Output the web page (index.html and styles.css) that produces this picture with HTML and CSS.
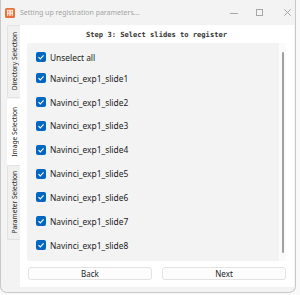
FILE: index.html
```
<!DOCTYPE html>
<html>
<head>
<meta charset="utf-8">
<link rel="stylesheet" href="styles.css">
</head>
<body>
<div class="window">
  <div class="titlebar">
    <svg class="appicon" width="10" height="10" viewBox="0 0 10 10">
      <rect x="0" y="0" width="10" height="10" rx="1.5" fill="#e8723a"/>
      <path d="M1.8 2.3H8.2M2.6 2.3V7.8M4.3 2.3V7.8M5.7 2.3V7.8M7.4 2.3V7.8M2.6 5.2H4.3M5.7 5.2H7.4" stroke="#fff" stroke-width="0.9" fill="none"/>
    </svg>
    <span class="title">Setting up registration parameters...</span>
    <div class="controls">
      <svg class="ctl-min" width="8" height="8" viewBox="0 0 8 8"><path d="M0 4.5H8" stroke="#a6a6a6" stroke-width="1"/></svg>
      <svg class="ctl-max" width="7" height="7" viewBox="0 0 7 7"><rect x="0.5" y="0.5" width="6" height="6" fill="none" stroke="#a6a6a6" stroke-width="1"/></svg>
      <svg class="ctl-close" width="7" height="7" viewBox="0 0 7 7"><path d="M0.3 0.3L6.7 6.7M6.7 0.3L0.3 6.7" stroke="#a6a6a6" stroke-width="1"/></svg>
    </div>
  </div>
  <div class="body">
    <div class="tabs">
      <div class="tab tab-dir"><span class="tab-label">Directory Selection</span></div>
      <div class="tab tab-img active"><span class="tab-label">Image Selection</span></div>
      <div class="tab tab-par"><span class="tab-label">Parameter Selection</span></div>
    </div>
    <div class="pane">
      <div class="heading">Step 3: Select slides to register</div>
      <div class="listbox">
        <div class="list">
          <div class="row first"><span class="cb"><svg width="10" height="10" viewBox="0 0 10 10"><path d="M2.5 5.2L4.3 6.9L7.6 3.3" stroke="#fff" stroke-width="1.1" fill="none"/></svg></span><span class="lbl">Unselect all</span></div>
          <div class="row"><span class="cb"><svg width="10" height="10" viewBox="0 0 10 10"><path d="M2.5 5.2L4.3 6.9L7.6 3.3" stroke="#fff" stroke-width="1.1" fill="none"/></svg></span><span class="lbl">Navinci_exp1_slide1</span></div>
          <div class="row"><span class="cb"><svg width="10" height="10" viewBox="0 0 10 10"><path d="M2.5 5.2L4.3 6.9L7.6 3.3" stroke="#fff" stroke-width="1.1" fill="none"/></svg></span><span class="lbl">Navinci_exp1_slide2</span></div>
          <div class="row"><span class="cb"><svg width="10" height="10" viewBox="0 0 10 10"><path d="M2.5 5.2L4.3 6.9L7.6 3.3" stroke="#fff" stroke-width="1.1" fill="none"/></svg></span><span class="lbl">Navinci_exp1_slide3</span></div>
          <div class="row"><span class="cb"><svg width="10" height="10" viewBox="0 0 10 10"><path d="M2.5 5.2L4.3 6.9L7.6 3.3" stroke="#fff" stroke-width="1.1" fill="none"/></svg></span><span class="lbl">Navinci_exp1_slide4</span></div>
          <div class="row"><span class="cb"><svg width="10" height="10" viewBox="0 0 10 10"><path d="M2.5 5.2L4.3 6.9L7.6 3.3" stroke="#fff" stroke-width="1.1" fill="none"/></svg></span><span class="lbl">Navinci_exp1_slide5</span></div>
          <div class="row"><span class="cb"><svg width="10" height="10" viewBox="0 0 10 10"><path d="M2.5 5.2L4.3 6.9L7.6 3.3" stroke="#fff" stroke-width="1.1" fill="none"/></svg></span><span class="lbl">Navinci_exp1_slide6</span></div>
          <div class="row"><span class="cb"><svg width="10" height="10" viewBox="0 0 10 10"><path d="M2.5 5.2L4.3 6.9L7.6 3.3" stroke="#fff" stroke-width="1.1" fill="none"/></svg></span><span class="lbl">Navinci_exp1_slide7</span></div>
          <div class="row"><span class="cb"><svg width="10" height="10" viewBox="0 0 10 10"><path d="M2.5 5.2L4.3 6.9L7.6 3.3" stroke="#fff" stroke-width="1.1" fill="none"/></svg></span><span class="lbl">Navinci_exp1_slide8</span></div>
        </div>
        <div class="scroll"><div class="thumb"></div></div>
      </div>
      <div class="buttons">
        <div class="btn">Back</div>
        <div class="btn">Next</div>
      </div>
    </div>
  </div>
</div>
</body>
</html>
```

FILE: styles.css
```
* { box-sizing: border-box; }
html, body { margin: 0; padding: 0; }
body {
  width: 300px;
  height: 295px;
  background: #f9f9f9;
  font-family: "Noto Sans", "Open Sans", sans-serif;
  overflow: hidden;
}
.window {
  width: 296px;
  height: 293px;
  background: #f3f3f3;
  border: 1px solid #c9c9c9;
  border-top: none;
  border-radius: 0 0 7px 7px;
  display: flex;
  flex-direction: column;
}
.titlebar {
  height: 25px;
  flex: none;
  display: flex;
  align-items: center;
}
.appicon { margin-left: 4px; flex: none; }
.title {
  margin-left: 5px;
  font-size: 7px;
  color: #a3a3a3;
  white-space: nowrap;
}
.controls {
  margin-left: auto;
  margin-right: 4px;
  display: flex;
  align-items: center;
}
.ctl-min { margin-right: 18px; }
.ctl-max { margin-right: 21px; }
.body {
  flex: 1;
  display: flex;
  min-height: 0;
}
.tabs {
  width: 13px;
  margin-left: 6px;
  display: flex;
  flex-direction: column;
  flex: none;
}
.tab {
  display: flex;
  align-items: center;
  justify-content: center;
  border: 1px solid #e2e2e2;
  border-right: none;
  background: #f0f0f0;
  border-radius: 2px 0 0 2px;
  flex: none;
  min-height: 0;
  overflow: hidden;
}
.tab-dir { height: 73px; }
.tab-img { height: 66px; margin-top: 1px; }
.tab-par { height: 75px; }
.tab.active {
  background: #ffffff;
  border-color: #ffffff;
}
.tab-label {
  writing-mode: vertical-rl;
  transform: rotate(180deg);
  font-size: 6.6px;
  color: #2a2a2a;
  white-space: nowrap;
}
.pane {
  flex: 1;
  background: #ffffff;
  margin-right: 1px;
  margin-bottom: 5px;
  padding: 0 8px 8px 7px;
  display: flex;
  flex-direction: column;
}
.heading {
  height: 18px;
  flex: none;
  display: flex;
  align-items: center;
  justify-content: center;
  font-family: "DejaVu Sans Mono", monospace;
  font-weight: bold;
  font-size: 7.1px;
  color: #333333;
  padding-top: 1px;
}
.listbox {
  height: 218px;
  flex: none;
  background: #f3f3f3;
  border-radius: 3px;
  display: flex;
  overflow: hidden;
}
.list {
  flex: 1;
  padding: 4px 0 0 9px;
  display: flex;
  flex-direction: column;
  gap: 3.86px;
}
.row {
  height: 20px;
  display: flex;
  align-items: center;
}
.row.first { margin-bottom: -2.7px; }
.cb {
  width: 10px;
  height: 10px;
  border-radius: 2px;
  background: #0067c0;
  display: flex;
  flex: none;
}
.lbl {
  margin-left: 4px;
  font-size: 8.4px;
  color: #1b1b1b;
}
.scroll {
  width: 7px;
  background: #fbfbfb;
  padding: 9px 0 0 3px;
  flex: none;
}
.thumb {
  width: 1.5px;
  height: 201px;
  background: #a0a0a0;
  border-radius: 1px;
}
.buttons {
  margin-top: 6px;
  display: flex;
  gap: 10px;
  padding-left: 1px;
}
.btn {
  flex: 1;
  height: 13px;
  border: 1px solid #e3e3e3;
  border-radius: 3px;
  background: #fdfdfd;
  font-size: 8px;
  color: #1b1b1b;
  display: flex;
  align-items: center;
  justify-content: center;
}
```
